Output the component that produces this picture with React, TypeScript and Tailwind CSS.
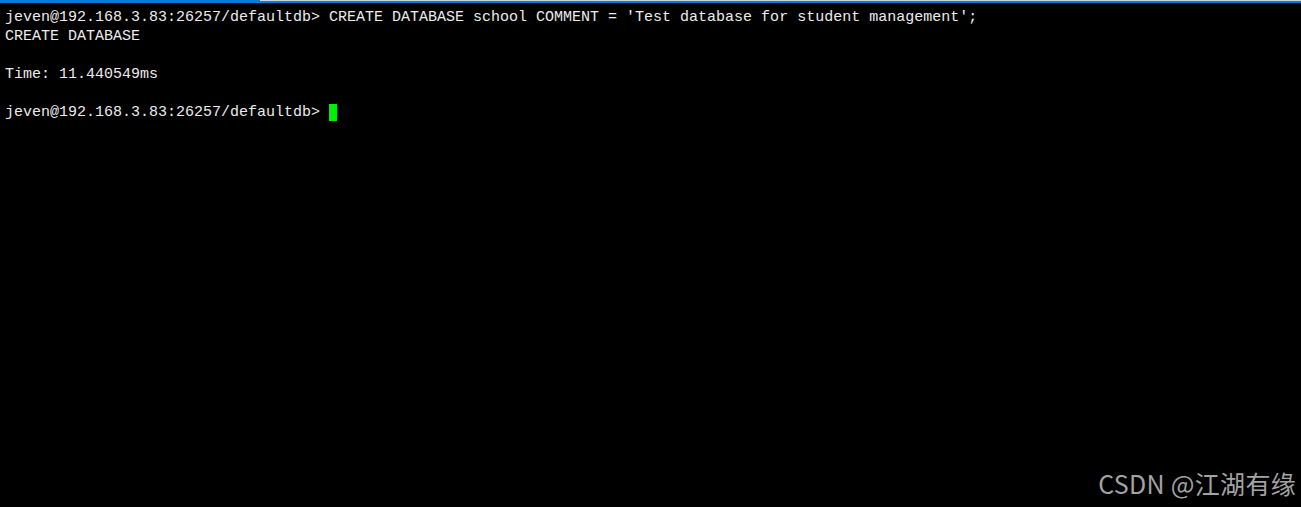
import React from "react";

export default function App() {
  const mono = { fontFamily: '"Liberation Mono", "DejaVu Sans Mono", monospace' };
  return (
    <div className="w-[1301px] h-[507px] bg-black relative overflow-hidden flex flex-col">
      <div className="flex h-px">
        <div className="w-[260px] bg-[#0a7ad6]" />
        <div className="flex-1 bg-[#c9d3dc]" />
      </div>
      <div className="h-[2px] bg-[#0a7ad6]" />
      <div
        className="pl-[5px] pt-[5px] text-[15px] leading-[19px] text-[#ececec] whitespace-pre font-['Liberation_Mono',monospace]"
        style={mono}
      >
        <div>jeven@192.168.3.83:26257/defaultdb&gt; CREATE DATABASE school COMMENT = 'Test database for student management';</div>
        <div>CREATE DATABASE</div>
        <div>{" "}</div>
        <div>Time: 11.440549ms</div>
        <div>{" "}</div>
        <div className="flex items-center">
          <span>jeven@192.168.3.83:26257/defaultdb&gt; </span>
          <span className="inline-block w-[8px] h-[17px] bg-[#00f000]" />
        </div>
      </div>
      <div className="absolute right-[5px] bottom-[9px] text-[25px] leading-[30px] tracking-[0.3px] text-[#a3a3a3] font-['Noto_Sans_CJK_SC',sans-serif] whitespace-pre">
        CSDN @江湖有缘
      </div>
    </div>
  );
}
